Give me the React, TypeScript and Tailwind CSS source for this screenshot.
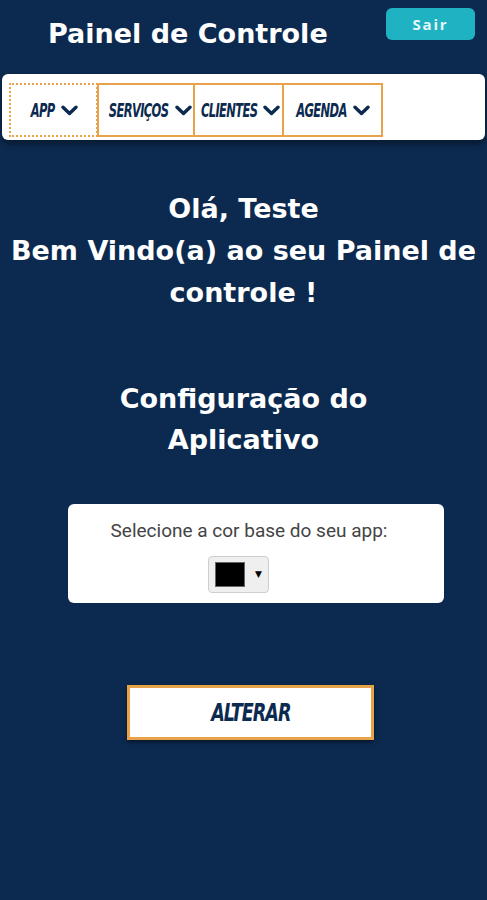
const navItems = [
  { label: 'APP', box: 'w-[89px] border-dotted', text: 'w-[26px]' },
  { label: 'SERVIÇOS', box: 'w-[98px] -ml-[1px] pl-[8px]', text: 'w-[62px]' },
  { label: 'CLIENTES', box: 'w-[91px] -ml-[2px] pl-[4px]', text: 'w-[57px]' },
  { label: 'AGENDA', box: 'w-[101px] -ml-[2px]', text: 'w-[52px]' },
]

const condensed = "font-['DejaVu_Sans',sans-serif] font-stretch-condensed font-bold italic tracking-[-0.05em] whitespace-nowrap"

function Chevron() {
  return (
    <svg width="17" height="11" viewBox="0 0 17 11" className="shrink-0">
      <path d="M2 2.2 L8.5 8.4 L15 2.2" fill="none" stroke="#0c2a4f" strokeWidth="3.4" strokeLinecap="round" strokeLinejoin="round" />
    </svg>
  )
}

export default function App() {
  return (
    <div className="min-h-[900px] bg-[#0c2a4f] font-['DejaVu_Sans',sans-serif] text-white">
      <header className="relative flex h-[74px] items-start">
        <h1 className="ml-[48px] mt-[14px] text-[27px] font-bold leading-[40px]">Painel de Controle</h1>
        <button className="absolute right-[12px] top-[8px] h-[32px] w-[89px] rounded-md bg-[#1fb2c3] font-['Open_Sans',sans-serif] text-[15px] font-bold tracking-[0.12em] text-[#e6f6f8]">
          Sair
        </button>
      </header>

      <nav className="mx-[2px] flex h-[66px] items-start rounded-md bg-white pl-[7px] pt-[9px] shadow-[0_4px_6px_rgba(0,0,0,0.4)]">
        {navItems.map(item => (
          <div
            key={item.label}
            className={`flex h-[54px] items-center justify-center gap-[5px] border-2 border-[#e8a24a] ${item.box}`}
          >
            <span className={`flex justify-center ${item.text}`}>
              <span className={`${condensed} scale-x-[0.64] text-[20px] leading-none text-[#0c2a4f]`}>{item.label}</span>
            </span>
            <Chevron />
          </div>
        ))}
      </nav>

      <section className="mt-[48px] text-center text-[27px] font-bold leading-[42px]">
        <p>Olá, Teste</p>
        <p>Bem Vindo(a) ao seu Painel de</p>
        <p>controle !</p>
      </section>

      <section className="mt-[64px] text-center text-[27px] font-bold leading-[41px]">
        <p>Configuração do</p>
        <p>Aplicativo</p>
      </section>

      <div className="ml-[68px] mt-[44px] flex h-[99px] w-[376px] flex-col items-center rounded-md bg-white pr-[14px] pt-[15px]">
        <p className="font-['Roboto',sans-serif] text-[19px] leading-[24px] text-[#444]">Selecione a cor base do seu app:</p>
        <div className="mr-[21px] mt-[13px] flex h-[37px] w-[61px] items-center gap-[10px] rounded-sm border border-[#cfcfcf] bg-[#efefef] px-[6px]">
          <div className="h-[25px] w-[31px] border border-[#666] bg-black" />
          <span className="text-[9px] text-black">▼</span>
        </div>
      </div>

      <div className="ml-[127px] mt-[82px] flex">
        <button className="flex h-[55px] w-[247px] items-center justify-center border-[3px] border-[#e8a24a] bg-white shadow-[0_2px_4px_rgba(0,0,0,0.5)]">
          <span className={`${condensed} scale-x-[0.78] text-[25px] leading-none text-[#0c2a4f]`}>ALTERAR</span>
        </button>
      </div>
    </div>
  )
}
